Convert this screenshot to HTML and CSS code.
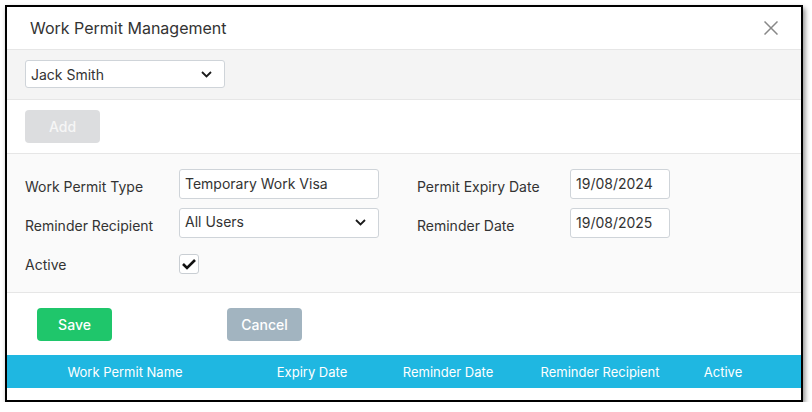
FILE: index.html
```html
<!DOCTYPE html>
<html lang="en">
<head>
<meta charset="utf-8">
<title>Work Permit Management</title>
<link rel="stylesheet" href="styles.css">
</head>
<body>
<div class="dialog">
  <div class="dialog-header">
    <h1 class="dialog-title">Work Permit Management</h1>
    <button class="close-btn" aria-label="Close">
      <svg width="14" height="14" viewBox="0 0 14 14"><path d="M0.5 0.5 L13.5 13.5 M13.5 0.5 L0.5 13.5" stroke="#888" stroke-width="1.5" fill="none"/></svg>
    </button>
  </div>

  <div class="employee-bar">
    <div class="select select-employee">
      <span>Jack Smith</span>
      <svg class="chevron" width="11" height="7" viewBox="0 0 11 7"><polyline points="1,1 5.5,5.5 10,1" stroke="#1a1a1a" stroke-width="1.8" fill="none"/></svg>
    </div>
  </div>

  <div class="add-bar">
    <button class="btn btn-add">Add</button>
  </div>

  <div class="form-section">
    <div class="form-grid">
      <label class="form-label">Work Permit Type</label>
      <div class="field field-wide">Temporary Work Visa</div>
      <label class="form-label label-right">Permit Expiry Date</label>
      <div class="field field-date">19/08/2024</div>

      <label class="form-label">Reminder Recipient</label>
      <div class="select field-wide">
        <span>All Users</span>
        <svg class="chevron" width="11" height="7" viewBox="0 0 11 7"><polyline points="1,1 5.5,5.5 10,1" stroke="#1a1a1a" stroke-width="1.8" fill="none"/></svg>
      </div>
      <label class="form-label label-right">Reminder Date</label>
      <div class="field field-date">19/08/2025</div>

      <label class="form-label label-active">Active</label>
      <div class="checkbox-cell">
        <span class="checkbox">
          <svg width="20" height="20" viewBox="0 0 20 20"><polyline points="4,10 8,14 16,6" stroke="#111" stroke-width="2.6" fill="none"/></svg>
        </span>
      </div>
    </div>
  </div>

  <div class="actions">
    <button class="btn btn-save">Save</button>
    <button class="btn btn-cancel">Cancel</button>
  </div>

  <div class="table-head">
    <div class="th">Work Permit Name</div>
    <div class="th">Expiry Date</div>
    <div class="th">Reminder Date</div>
    <div class="th">Reminder Recipient</div>
    <div class="th">Active</div>
    <div class="th"></div>
  </div>
  <div class="table-body"></div>
</div>
</body>
</html>
```

FILE: styles.css
```css
* { box-sizing: border-box; }

html, body {
  margin: 0;
  padding: 0;
  background: #ffffff;
}

body {
  font-family: Inter, "Noto Sans", "Liberation Sans", sans-serif;
  font-size: 14px;
  color: #333333;
}

.dialog {
  margin: 5px 0 0 5px;
  width: 798px;
  border: 2px solid #000000;
  background: #ffffff;
  box-shadow: 2px 3px 5px rgba(0, 0, 0, 0.45);
}

.dialog-header {
  height: 43px;
  display: flex;
  align-items: center;
  justify-content: space-between;
  padding: 0 23px 0 23px;
  border-bottom: 1px solid #e6e6e6;
}

.dialog-title {
  margin: 0;
  font-size: 16px;
  font-weight: 400;
  color: #333333;
  line-height: 20px;
}

.close-btn {
  border: 0;
  background: transparent;
  padding: 0;
  width: 14px;
  height: 14px;
  display: flex;
  cursor: pointer;
}

.employee-bar {
  height: 50px;
  background: #f4f4f4;
  border-bottom: 1px solid #e6e6e6;
  padding: 10px 18px 0 18px;
}

.select {
  display: flex;
  align-items: center;
  justify-content: space-between;
  height: 29px;
  border: 1px solid #cfd4d9;
  border-radius: 3px;
  background: #ffffff;
  padding: 0 12px 0 5px;
  color: #333333;
}

.select-employee {
  width: 200px;
  height: 28px;
  padding-bottom: 0;
}

.select-employee span { padding-top: 1px; }

.select span { line-height: 1; }

.add-bar {
  height: 54px;
  border-bottom: 1px solid #e6e6e6;
  padding: 10px 18px 0 18px;
}

.btn {
  font-family: Inter, "Noto Sans", "Liberation Sans", sans-serif;
  font-size: 14px;
  font-weight: 500;
  color: #ffffff;
  width: 75px;
  height: 33px;
  border: 0;
  border-radius: 4px;
  padding: 0;
  cursor: pointer;
}

.btn-add {
  background: #dcdddf;
  color: #f6f6f6;
}

.form-section {
  height: 139px;
  background: #fafafa;
  border-bottom: 1px solid #e6e6e6;
  padding: 15px 0 0 18px;
}

.form-grid {
  display: grid;
  grid-template-columns: 154px 200px 38px 153px 100px;
  grid-template-rows: 30px 30px 34px;
  row-gap: 9px;
  align-items: center;
}

.form-label {
  padding-top: 4px;
  color: #333333;
  line-height: 17px;
}

.label-active { padding-top: 0; }

.label-right { grid-column: 4; }

.field {
  height: 30px;
  border: 1px solid #cfd4d9;
  border-radius: 3px;
  background: #ffffff;
  padding: 0 5px;
  display: flex;
  align-items: center;
  padding-bottom: 2px;
  color: #333333;
}

.field-wide { width: 200px; }
.field-date { width: 100px; }

.select.field-wide { height: 30px; padding-bottom: 2px; }

.checkbox-cell {
  display: flex;
  align-items: center;
}

.checkbox {
  width: 20px;
  height: 20px;
  border: 1px solid #c9ced3;
  border-radius: 3px;
  background: #ffffff;
  display: flex;
  align-items: center;
  justify-content: center;
}

.checkbox svg { display: block; margin: -1px; }

.actions {
  height: 62px;
  display: flex;
  gap: 115px;
  padding: 15px 0 0 30px;
}

.btn-save { background: #1fc66b; }
.btn-cancel { background: #a2b4c0; }

.table-head {
  height: 33px;
  background: #1fb7e1;
  display: grid;
  grid-template-columns: 236px 138px 134px 170px 76px 40px;
  align-items: center;
}

.th {
  color: #ffffff;
  text-align: center;
  font-size: 13px;
  line-height: 16px;
}

.table-body {
  height: 12px;
  background: #ffffff;
}
```
